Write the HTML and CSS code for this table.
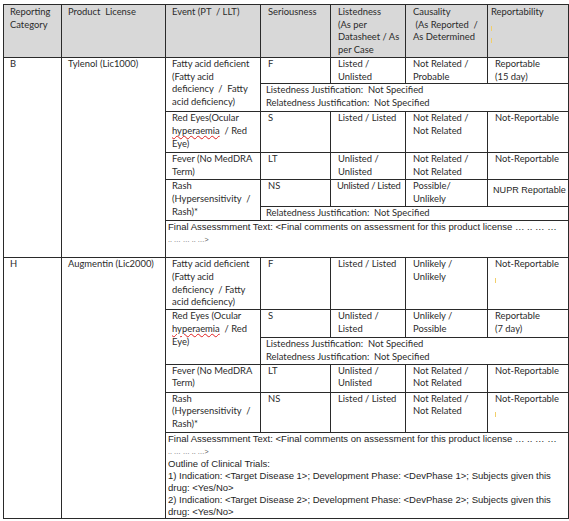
FILE: index.html
```html
<!DOCTYPE html>
<html>
<head>
<meta charset="utf-8">
<link rel="stylesheet" href="styles.css">
</head>
<body>
<div class="page">
<table class="grid">
  <colgroup>
    <col class="c1"><col class="c2"><col class="c3"><col class="c4"><col class="c5"><col class="c6"><col class="c7">
  </colgroup>
  <tr class="h53 head">
    <th>Reporting<br>Category</th>
    <th>Product&nbsp; License</th>
    <th>Event (PT&nbsp; / LLT)</th>
    <th class="pl7">Seriousness</th>
    <th class="pl7">Listedness<br>(As per<br>Datasheet / As<br>per Case</th>
    <th class="pl7">Causality<br>&nbsp;(As Reported&nbsp; /<br>As Determined</th>
    <th class="pl3">Reportability<span class="hl"></span><span class="hl"></span></th>
  </tr>

  <tr class="h26">
    <td rowspan="7">B</td>
    <td rowspan="7">Tylenol (Lic1000)</td>
    <td rowspan="2">Fatty acid deficient<br>(Fatty acid<br>deficiency&nbsp; /&nbsp; Fatty<br>acid deficiency)</td>
    <td class="pl7">F</td>
    <td class="pl7">Listed /<br>Unlisted</td>
    <td class="pl7">Not Related /<br>Probable</td>
    <td class="pl7">Reportable<br>(15 day)</td>
  </tr>
  <tr class="h28">
    <td colspan="4" class="pl5">Listedness Justification:&nbsp; Not Specified<br>Relatedness Justification:&nbsp; Not Specified</td>
  </tr>
  <tr class="h41">
    <td>Red Eyes(Ocular<br><span class="sp">hyperaemia</span>&nbsp; / Red<br>Eye)</td>
    <td class="pl7">S</td>
    <td class="pl7">Listed / Listed</td>
    <td class="pl7">Not Related /<br>Not Related</td>
    <td class="pl7">Not-Reportable</td>
  </tr>
  <tr class="h27">
    <td>Fever (No MedDRA<br>Term)</td>
    <td class="pl7">LT</td>
    <td class="pl7">Unlisted /<br>Unlisted</td>
    <td class="pl7">Not Related /<br>Not Related</td>
    <td class="pl7">Not-Reportable</td>
  </tr>
  <tr class="h27">
    <td rowspan="2">Rash<br>(Hypersensitivity&nbsp; /<br>Rash)*</td>
    <td class="pl7">NS</td>
    <td class="pl7 tight">Unlisted / Listed</td>
    <td class="pl7">Possible/<br>Unlikely</td>
    <td class="pl5 arial nupr">NUPR Reportable</td>
  </tr>
  <tr class="h13">
    <td colspan="4" class="pl5">Relatedness Justification:&nbsp; Not Specified</td>
  </tr>
  <tr class="h37">
    <td colspan="5" class="arial final">Final Assessmment Text: &lt;Final comments on assessment for this product license &hellip; .. &hellip; &hellip;<br><span class="dots">.. &hellip; &hellip; .. &hellip;&gt;</span></td>
  </tr>

  <tr class="h52">
    <td rowspan="7">H</td>
    <td rowspan="7">Augmentin (Lic2000)</td>
    <td>Fatty acid deficient<br>(Fatty acid<br>deficiency&nbsp; / Fatty<br>acid deficiency)</td>
    <td class="pl7">F</td>
    <td class="pl7">Listed / Listed</td>
    <td class="pl7">Unlikely /<br>Unlikely</td>
    <td class="pl7">Not-Reportable<span class="hl"></span></td>
  </tr>
  <tr class="h28">
    <td rowspan="2">Red Eyes (Ocular<br><span class="sp">hyperaemia</span>&nbsp; / Red<br>Eye)</td>
    <td class="pl7">S</td>
    <td class="pl7">Unlisted /<br>Listed</td>
    <td class="pl7">Unlikely /<br>Possible</td>
    <td class="pl7">Reportable<br>(7 day)</td>
  </tr>
  <tr class="h26">
    <td colspan="4" class="pl5">Listedness Justification:&nbsp; Not Specified<br>Relatedness Justification:&nbsp; Not Specified</td>
  </tr>
  <tr class="h28">
    <td>Fever (No MedDRA<br>Term)</td>
    <td class="pl7">LT</td>
    <td class="pl7">Unlisted /<br>Unlisted</td>
    <td class="pl7">Not Related /<br>Not Related</td>
    <td class="pl7">Not-Reportable</td>
  </tr>
  <tr class="h40">
    <td>Rash<br>(Hypersensitivity&nbsp; /<br>Rash)*</td>
    <td class="pl7">NS</td>
    <td class="pl7">Listed / Listed</td>
    <td class="pl7">Not Related /<br>Not Related</td>
    <td class="pl7">Not-Reportable<span class="hl"></span></td>
  </tr>
  <tr class="h86">
    <td colspan="5" class="arial final">Final Assessmment Text: &lt;Final comments on assessment for this product license &hellip; .. &hellip; &hellip;<br><span class="dots">.. &hellip; &hellip; .. &hellip;&gt;</span><br>Outline of Clinical Trials:<br>1) Indication: &lt;Target Disease 1&gt;; Development Phase: &lt;DevPhase 1&gt;; Subjects given this<br>drug: &lt;Yes/No&gt;<br>2) Indication: &lt;Target Disease 2&gt;; Development Phase: &lt;DevPhase 2&gt;; Subjects given this<br>drug: &lt;Yes/No&gt;</td>
  </tr>
</table>
</div>
</body>
</html>
```

FILE: styles.css
```css
html, body {
  margin: 0;
  padding: 0;
  background: #ffffff;
}

.page {
  padding: 4px 0 0 3px;
}

.grid {
  border-collapse: collapse;
  table-layout: fixed;
  width: 565px;
  font-family: "Lato", "Liberation Sans", sans-serif;
  font-size: 9.4px;
  line-height: 12.7px;
  color: #2b2b2b;
}

.c1 { width: 58px; }
.c2 { width: 104px; }
.c3 { width: 95px; }
.c4 { width: 70px; }
.c5 { width: 75px; }
.c6 { width: 82px; }
.c7 { width: 81px; }

.grid th,
.grid td {
  border: 1px solid #2a2a2a;
  padding: 0 2px 0 6px;
  vertical-align: top;
  text-align: left;
  font-weight: normal;
  white-space: nowrap;
  overflow: hidden;
}

.head th {
  background: #d8d8d8;
  padding-top: 1px;
}

.pl3 { padding-left: 3px !important; }
.pl5 { padding-left: 5px !important; }
.pl7 { padding-left: 7px !important; }

.tight {
  letter-spacing: -0.25px;
  padding-left: 6px !important;
}

.h13 { height: 13px; }
.h26 { height: 26px; }
.h27 { height: 27px; }
.h28 { height: 28px; }
.h37 { height: 37px; }
.h40 { height: 40px; }
.h41 { height: 41px; }
.h52 { height: 52px; }
.h53 { height: 53px; }
.h86 { height: 85px; }

.arial {
  font-family: "Liberation Sans", Arial, sans-serif;
  font-size: 9.5px;
  color: #1e1e1e;
}

.nupr {
  font-size: 9.1px;
  padding-top: 4px !important;
}

.final {
  padding-left: 2px !important;
  line-height: 12.1px;
  padding-top: 0;
}

.dots {
  font-size: 7px;
  color: #555;
}

.sp {
  text-decoration: underline wavy #e02020;
  text-decoration-thickness: 1px;
  text-underline-offset: 1px;
}

.hl {
  display: block;
  width: 1px;
  height: 5px;
  margin: 7px 0 0 0;
  background: #f2cf6a;
}
```
